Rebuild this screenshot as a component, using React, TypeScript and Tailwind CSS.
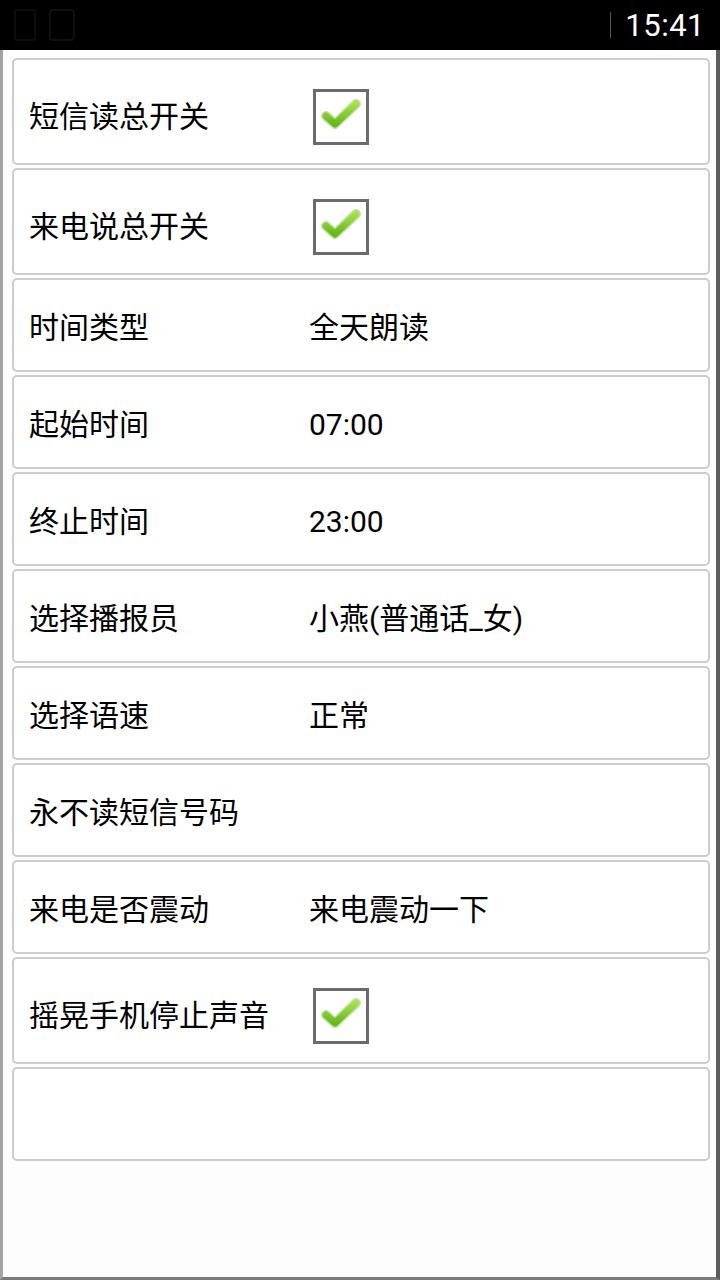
import type { ReactNode } from "react";

const FONT = "font-['Roboto','Noto_Sans_CJK_SC',sans-serif]";

type Row =
  | { kind: "check"; label: string }
  | { kind: "text"; label: string; value?: string }
  | { kind: "empty" };

const rows: Row[] = [
  { kind: "check", label: "短信读总开关" },
  { kind: "check", label: "来电说总开关" },
  { kind: "text", label: "时间类型", value: "全天朗读" },
  { kind: "text", label: "起始时间", value: "07:00" },
  { kind: "text", label: "终止时间", value: "23:00" },
  { kind: "text", label: "选择播报员", value: "小燕(普通话_女)" },
  { kind: "text", label: "选择语速", value: "正常" },
  { kind: "text", label: "永不读短信号码" },
  { kind: "text", label: "来电是否震动", value: "来电震动一下" },
  { kind: "check", label: "摇晃手机停止声音" },
  { kind: "empty" },
];

function CheckBox() {
  return (
    <div className="w-[56px] h-[56px] border-[3px] border-[#6b6b6b] bg-white">
      <svg width="50" height="50" viewBox="0 0 50 50">
        <defs>
          <linearGradient id="g" x1="0" y1="0" x2="0" y2="1">
            <stop offset="0" stopColor="#a6e04c" />
            <stop offset="1" stopColor="#67b81c" />
          </linearGradient>
        </defs>
        <path
          d="M10 24 L19 32 L40 12"
          fill="none"
          stroke="#9bcf6a"
          strokeWidth="10"
          strokeLinecap="round"
          strokeLinejoin="round"
          opacity="0.6"
        />
        <path
          d="M10 24 L19 32 L40 12"
          fill="none"
          stroke="url(#g)"
          strokeWidth="7"
          strokeLinecap="round"
          strokeLinejoin="round"
        />
      </svg>
    </div>
  );
}

function Card({ tall, children }: { tall?: boolean; children?: ReactNode }) {
  return (
    <div
      className={`flex items-center border-2 border-[#cdcdcd] rounded-[5px] bg-white pl-[15px] ${
        tall ? "h-[107px] pt-[11px]" : "h-[94px] pt-[6px]"
      }`}
    >
      {children}
    </div>
  );
}

function StatusBar() {
  return (
    <div className="h-[50px] bg-black flex items-center pl-[14px] pr-[15px]">
      {/* dim notification icons */}
      <div className="w-[22px] h-[32px] border-2 border-[#0d0d0d] rounded-[2px]" />
      <div className="ml-[13px] w-[26px] h-[32px] border-2 border-[#12100a] rounded-[4px]" />
      <div className="flex-1" />
      <div className="w-[1px] h-[26px] bg-[#555] mr-[14px]" />
      <span className="text-white text-[31px] leading-none tracking-[0.5px]">15:41</span>
    </div>
  );
}

export default function App() {
  return (
    <div className={`w-[720px] h-[1280px] bg-white ${FONT}`}>
      <StatusBar />
      <div className="h-[1230px] bg-[#fdfdfd] border-l-[3px] border-l-[#a3a3a3] border-r-[4px] border-r-[#5c5c5c] border-b-[3px] border-b-[#7a7a7a] pt-[8px] pl-[9px] pr-[6px]">
        <div className="flex flex-col gap-[3px]">
          {rows.map((row, i) => {
            if (row.kind === "empty") return <Card key={i} />;
            return (
              <Card key={i} tall={row.kind === "check"}>
                <span className="w-[280px] text-[30px] text-black leading-none">
                  {row.label}
                </span>
                {row.kind === "check" ? (
                  <div className="ml-[4px]">
                    <CheckBox />
                  </div>
                ) : (
                  <span className="text-[30px] text-black leading-none">
                    {row.value}
                  </span>
                )}
              </Card>
            );
          })}
        </div>
      </div>
    </div>
  );
}
